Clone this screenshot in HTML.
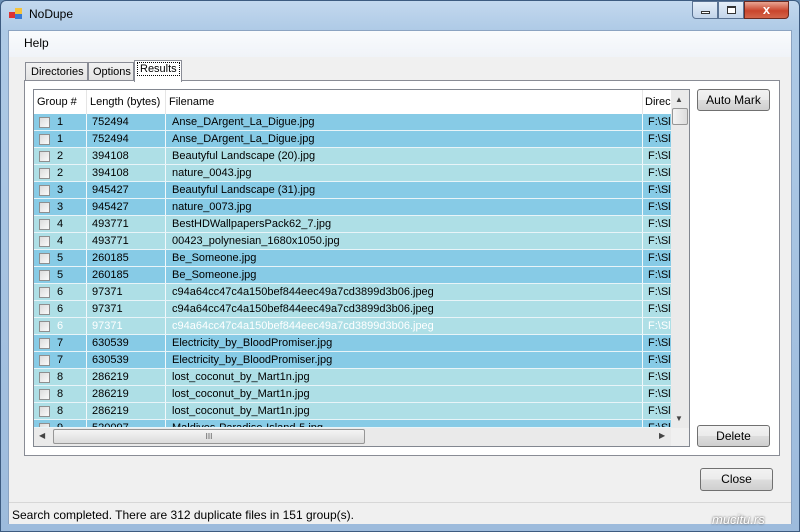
<!DOCTYPE html>
<html><head><meta charset="utf-8"><style>
*{box-sizing:border-box;margin:0;padding:0}
body{width:800px;height:532px;overflow:hidden;font-family:"Liberation Sans",sans-serif;font-size:11px;color:#000;background:#6b8fb5;position:relative}
.frame{position:absolute;left:0;top:0;width:800px;height:532px;background:linear-gradient(180deg,#c3d8ee 0,#aecae6 30px,#9dbbdc 100%);border:1px solid #3d5b80;border-radius:6px 6px 0 0}
.client{position:absolute;left:8px;top:30px;width:784px;height:494px;background:#f0f0f0;border:1px solid #8ba3c1}
.abs{position:absolute}
.btn{position:absolute;border:1px solid #707070;border-radius:3px;background:linear-gradient(#f2f2f2 0,#ebebeb 50%,#dddddd 51%,#cfcfcf 100%);text-align:center;font-size:12px}
.row{position:absolute;left:34px;width:637px;height:17px;border-bottom:1px solid #e8f4f8;font-size:11px}
.row span{position:absolute;top:2px}
.cb{position:absolute;left:5px;top:3px;width:11px;height:11px;border:1px solid #8e8f8f;background:linear-gradient(135deg,#dcdcdc,#fafafa)}
.d{background:#87cbe6}.l{background:#aedfe6}
.vl{position:absolute;top:0;width:1px;height:16px;background:#f2f9fb}
</style></head><body>
<div class="frame"></div>
<div class="abs" style="left:9px;top:8px;width:13px;height:11px">
<div class="abs" style="left:0;top:4px;width:6px;height:6px;background:#d33"></div>
<div class="abs" style="left:6px;top:0;width:7px;height:6px;background:#f5c33b"></div>
<div class="abs" style="left:6px;top:6px;width:7px;height:5px;background:#3a7bd5"></div></div>
<div class="abs" style="left:29px;top:7px;font-size:12px">NoDupe</div>
<div class="abs" style="left:692px;top:1px;width:26px;height:18px;border:1px solid #5a7394;border-radius:0 0 0 4px;background:linear-gradient(#e4eef8,#c2d4ea)"><div class="abs" style="left:8px;top:9px;width:9px;height:3px;border:1px solid #333;background:#fff"></div></div>
<div class="abs" style="left:718px;top:1px;width:26px;height:18px;border:1px solid #5a7394;background:linear-gradient(#e4eef8,#c2d4ea)"><div class="abs" style="left:8px;top:4px;width:9px;height:8px;border:1px solid #333;border-top-width:2px;background:#fff"></div></div>
<div class="abs" style="left:744px;top:1px;width:45px;height:18px;border:1px solid #6b2a20;border-radius:0 0 4px 0;background:linear-gradient(#e8a593,#c9452c 55%,#d3654a);color:#fff;font-weight:bold;text-align:center;font-size:13px;line-height:16px">x</div>
<div class="client">
<div class="abs" style="left:0;top:0;width:782px;height:26px;background:linear-gradient(#f9fbfd,#f0f3f8)"></div>
<div class="abs" style="left:15px;top:5px;font-size:12px">Help</div>
</div>
<div class="abs" style="left:25px;top:62px;width:63px;height:19px;border:1px solid #898c95;background:linear-gradient(#f2f2f2,#e3e3e3);font-size:11px;padding:3px 0 0 5px">Directories</div>
<div class="abs" style="left:88px;top:62px;width:46px;height:19px;border:1px solid #898c95;background:linear-gradient(#f2f2f2,#e3e3e3);font-size:11px;padding:3px 0 0 4px">Options</div>
<div class="abs" style="left:24px;top:80px;width:756px;height:376px;border:1px solid #898c95;background:#fff"></div>
<div class="abs" style="left:134px;top:60px;width:48px;height:22px;border:1px solid #898c95;border-bottom:none;background:#fff;font-size:11px;padding:2px 0 0 2px"><span style="border:1px dotted #000;padding:0 2px">Results</span></div>
<div class="abs" style="left:33px;top:89px;width:657px;height:358px;border:1px solid #828790;background:#fff;overflow:hidden"></div>
<div class="abs" style="left:34px;top:90px;width:637px;height:24px;background:#fff;font-size:11px">
<span class="abs" style="left:3px;top:6px">Group #</span>
<span class="abs" style="left:56px;top:6px">Length (bytes)</span>
<span class="abs" style="left:135px;top:6px">Filename</span>
<span class="abs" style="left:611px;top:6px">Direc</span>
<div class="abs" style="left:52px;top:0;width:1px;height:24px;background:#e5e5e5"></div>
<div class="abs" style="left:131px;top:0;width:1px;height:24px;background:#e5e5e5"></div>
<div class="abs" style="left:608px;top:0;width:1px;height:24px;background:#e5e5e5"></div>
</div>
<div id="rows"></div>
<div class="abs" style="left:671px;top:90px;width:18px;height:338px;background:#eaeaea"></div>
<div class="abs" style="left:675px;top:95px;font-size:8px;color:#444">▲</div>
<div class="abs" style="left:672px;top:108px;width:16px;height:17px;border:1px solid #969696;border-radius:2px;background:linear-gradient(90deg,#f4f4f4,#dcdcdc)"></div>
<div class="abs" style="left:675px;top:414px;font-size:8px;color:#444">▼</div>
<div class="abs" style="left:34px;top:428px;width:655px;height:18px;background:#eaeaea"></div>
<div class="abs" style="left:39px;top:431px;font-size:8px;color:#444">◀</div>
<div class="abs" style="left:53px;top:429px;width:312px;height:15px;border:1px solid #969696;border-radius:2px;background:linear-gradient(#f4f4f4,#dcdcdc);text-align:center;font-size:8px;line-height:13px;color:#555">III</div>
<div class="abs" style="left:659px;top:431px;font-size:8px;color:#444">▶</div>
<div class="abs" style="left:671px;top:428px;width:18px;height:18px;background:#f0f0f0"></div>
<div class="btn" style="left:697px;top:89px;width:73px;height:22px;line-height:20px">Auto Mark</div>
<div class="btn" style="left:697px;top:425px;width:73px;height:22px;line-height:20px">Delete</div>
<div class="btn" style="left:700px;top:468px;width:73px;height:23px;line-height:21px">Close</div>
<div class="abs" style="left:9px;top:502px;width:782px;height:22px;background:#f0f0f0;border-top:1px solid #d7d7d7;font-size:12px;padding:5px 0 0 3px">Search completed. There are 312 duplicate files in 151 group(s).</div>
<div class="abs" style="left:712px;top:512px;font-size:13px;color:#fff;font-style:italic;text-shadow:0 0 2px #333">mucitu.rs</div>
<script>
var d=[[1,752494,"Anse_DArgent_La_Digue.jpg"],[1,752494,"Anse_DArgent_La_Digue.jpg"],[2,394108,"Beautyful Landscape (20).jpg"],[2,394108,"nature_0043.jpg"],[3,945427,"Beautyful Landscape (31).jpg"],[3,945427,"nature_0073.jpg"],[4,493771,"BestHDWallpapersPack62_7.jpg"],[4,493771,"00423_polynesian_1680x1050.jpg"],[5,260185,"Be_Someone.jpg"],[5,260185,"Be_Someone.jpg"],[6,97371,"c94a64cc47c4a150bef844eec49a7cd3899d3b06.jpeg"],[6,97371,"c94a64cc47c4a150bef844eec49a7cd3899d3b06.jpeg"],[6,97371,"c94a64cc47c4a150bef844eec49a7cd3899d3b06.jpeg"],[7,630539,"Electricity_by_BloodPromiser.jpg"],[7,630539,"Electricity_by_BloodPromiser.jpg"],[8,286219,"lost_coconut_by_Mart1n.jpg"],[8,286219,"lost_coconut_by_Mart1n.jpg"],[8,286219,"lost_coconut_by_Mart1n.jpg"],[9,520097,"Maldives-Paradise-Island-5.jpg"]];
var h="";d.forEach(function(r,i){var t=114+i*17;var hh=Math.min(17,428-t);var c=r[0]%2?"d":"l";var col=i==12?"color:#fff;":"";
h+='<div class="row '+c+'" style="top:'+t+'px;height:'+hh+'px;overflow:hidden;'+col+'"><div class="cb"></div><span style="left:23px">'+r[0]+'</span><span style="left:58px">'+r[1]+'</span><span style="left:138px">'+r[2]+'</span><span style="left:614px">F:\\Sl</span><div class="vl" style="left:52px"></div><div class="vl" style="left:131px"></div><div class="vl" style="left:608px"></div></div>';});
document.getElementById("rows").innerHTML=h;
</script>
</body></html>
